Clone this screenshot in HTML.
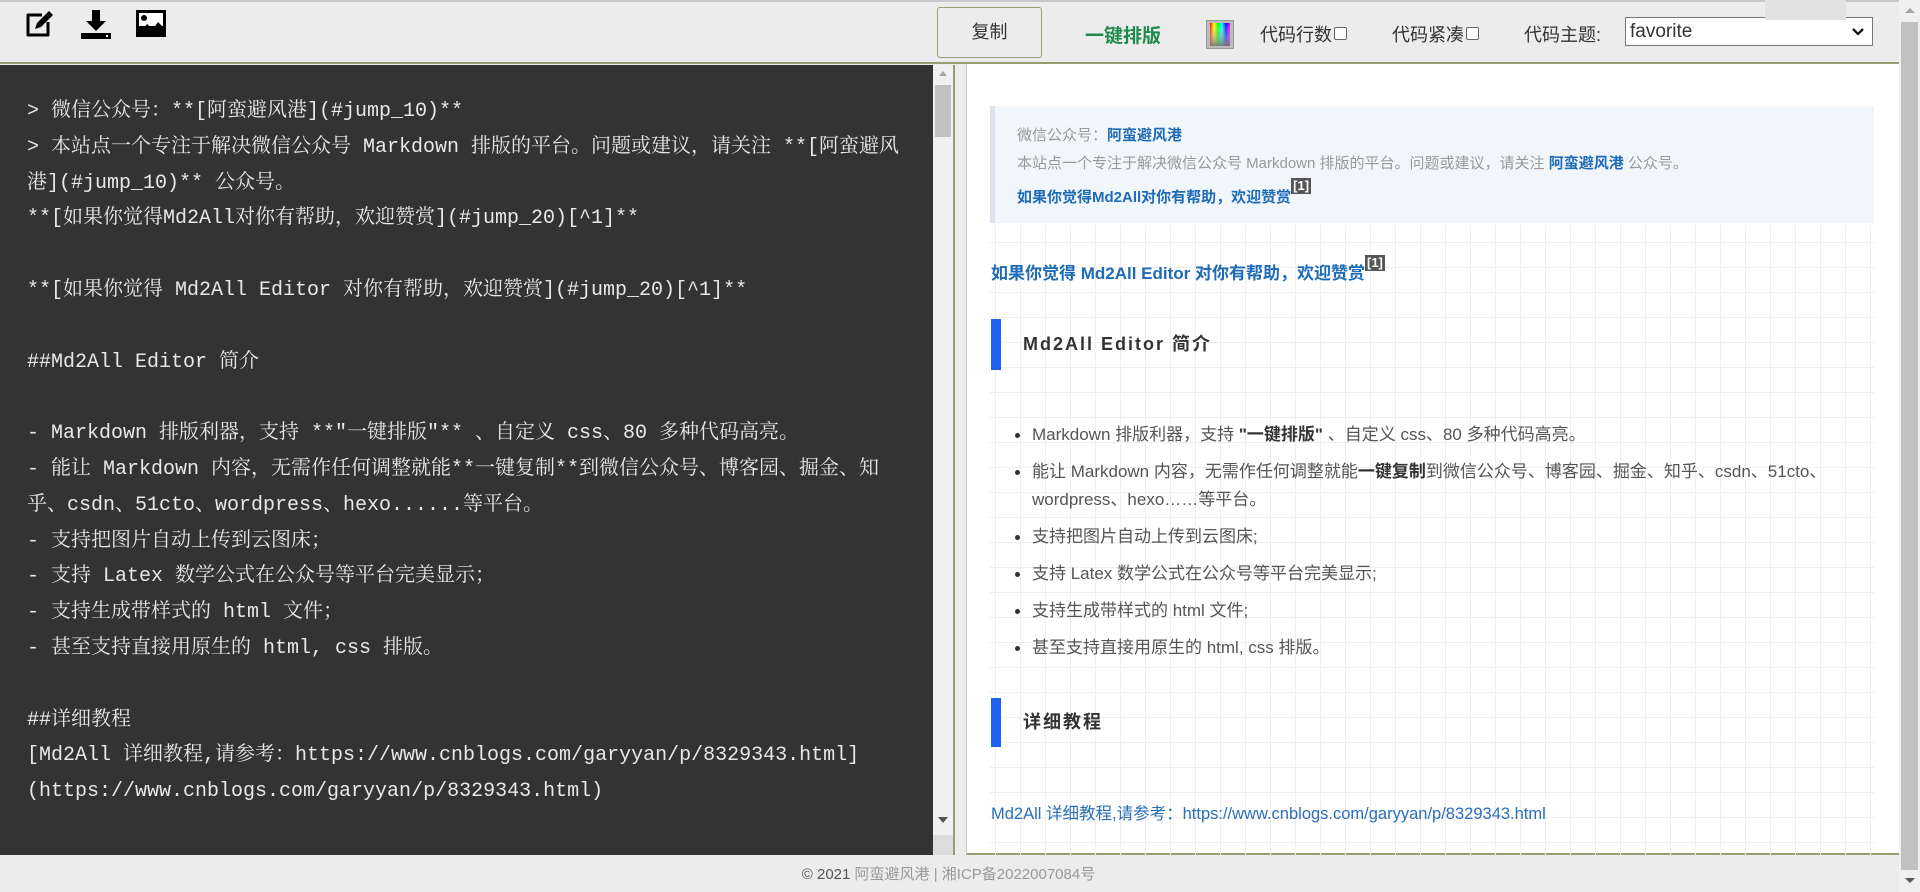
<!DOCTYPE html>
<html><head><meta charset="utf-8"><style>
*{margin:0;padding:0;box-sizing:border-box}
html,body{width:1920px;height:892px;overflow:hidden;background:#ececec;font-family:"Liberation Sans","Noto Sans CJK SC",sans-serif}
.topline{position:absolute;left:0;top:0;width:1899px;height:2px;background:#c8c8c8}
.tb{position:absolute;left:0;top:2px;width:1899px;height:62px;background:#ececec;border-bottom:2px solid #9a9d74}
.ic{position:absolute;top:10px}
.btn{position:absolute;left:937px;top:7px;width:105px;height:51px;border:1px solid #9a9d74;border-radius:3px;background:#ececec;font-size:18px;color:#333;text-align:center;line-height:49px}
.tl{position:absolute;font-size:18px;color:#333;top:21px}
.cb{display:inline-block;width:13px;height:13px;border:1px solid #666;border-radius:2px;background:#fff;vertical-align:1px;margin-left:2px}
.sel{position:absolute;left:1625px;top:17px;width:248px;height:29px;border:1px solid #777;background:#fff;font-size:19px;color:#333;padding-left:4px;line-height:27px}
.ed{position:absolute;left:0;top:65px;width:955px;height:790px;background:#333;border-right:2px solid #9a9d74}
.code{position:absolute;left:27px;top:94px;font-family:"Liberation Mono","Noto Serif CJK SC",monospace;font-size:20px;line-height:35.8px;color:#e8e8e8;white-space:pre}
.esb{position:absolute;left:933px;top:65px;width:20px;height:790px;background:#f0f0f0}
.pv{position:absolute;left:966px;top:64px;width:933px;height:791px;background:#fff;border-left:1px solid #c8c8c8;border-bottom:2px solid #9a9d74}
.grid{position:absolute;left:990px;top:225px;width:884px;height:630px;background-image:linear-gradient(#eeeeee 1px,transparent 1px),linear-gradient(90deg,#eeeeee 1px,transparent 1px);background-size:25px 25px;background-position:-20px 17px}
.bq{position:absolute;left:990px;top:106px;width:884px;height:117px;background:#f1f6fa;border-left:5px solid #dbe4ee;font-size:15px;color:#999;padding:16px 0 0 22px;line-height:28px}
a,.a{color:#1e6bb8;text-decoration:none}
b.a{font-weight:bold}
sup{display:inline-block;background:#555;color:#fff;font-size:13px;line-height:16px;padding:0 2px;vertical-align:12px;font-weight:bold}
.h{position:absolute;left:991px;border-left:10px solid #1e62f5;font-size:18px;font-weight:bold;color:#333;letter-spacing:2px;padding-left:22px}
ul{position:absolute;left:1015px;top:421px;font-size:17px;color:#555;line-height:28px;list-style:none}
ul li{position:relative;padding-left:17px;margin-bottom:9px}
ul li:before{content:"";position:absolute;left:0;top:12px;width:5px;height:5px;border-radius:50%;background:#333}
ul b{color:#333}
.psb{position:absolute;left:1899px;top:0;width:21px;height:892px;background:#f0f0f0}
.ft{position:absolute;top:863px;left:0;width:1899px;text-align:center;font-size:15px;color:#999;padding-right:2px}
</style></head><body>
<div class="topline"></div>
<div class="tb">
<svg class="ic" style="left:25px;top:8px" width="30" height="28" viewBox="0 0 30 28"><path d="M17 5H3v20h20V12" fill="none" stroke="#000" stroke-width="3" stroke-linejoin="round"/><path d="M10 19l2-6L24 1l4 4-12 12z" fill="#000"/></svg>
<svg class="ic" style="left:81px;top:8px" width="30" height="30" viewBox="0 0 30 30"><path d="M11 0h8v11h6L15 21 5 11h6z" fill="#000"/><rect x="0" y="23" width="30" height="6" fill="#000"/><rect x="25" y="25" width="2" height="2" fill="#fff"/></svg>
<svg class="ic" style="left:136px;top:8px" width="30" height="27" viewBox="0 0 30 27"><rect x="0" y="0" width="30" height="27" fill="#000"/><rect x="3" y="3" width="24" height="13" fill="#fff"/><circle cx="8" cy="8" r="3" fill="#000"/><path d="M3 24l8-10 6 5 5-7 5 5v12z" fill="#000"/></svg>
</div>
<div class="btn">复制</div>
<div class="tl" style="left:1085px;color:#1c8a4a;font-weight:bold;font-size:19px">一键排版</div>
<svg style="position:absolute;left:1206px;top:20px" width="28" height="29"><defs><linearGradient id="g" x1="0" x2="1"><stop offset="0" stop-color="#f00"/><stop offset=".2" stop-color="#ff0"/><stop offset=".4" stop-color="#0f0"/><stop offset=".6" stop-color="#0ff"/><stop offset=".8" stop-color="#00f"/><stop offset="1" stop-color="#f0f"/></linearGradient><linearGradient id="g2" x1="0" y1="0" x2="0" y2="1"><stop offset="0" stop-color="#fff" stop-opacity="0"/><stop offset="1" stop-color="#777" stop-opacity=".9"/></linearGradient></defs><rect x="0.5" y="0.5" width="27" height="28" fill="#bbb" stroke="#999"/><rect x="4" y="3" width="20" height="23" fill="url(#g)"/><rect x="4" y="3" width="20" height="23" fill="url(#g2)"/></svg>
<div class="tl" style="left:1260px">代码行数<span class="cb"></span></div>
<div class="tl" style="left:1392px">代码紧凑<span class="cb"></span></div>
<div class="tl" style="left:1524px">代码主题:</div>
<div class="sel">favorite<svg style="position:absolute;right:8px;top:10px" width="12" height="8"><path d="M1 1l5 5 5-5" fill="none" stroke="#000" stroke-width="2.2"/></svg></div>
<div style="position:absolute;left:1765px;top:0;width:81px;height:20px;background:#e2e2e2"></div>

<div class="ed"></div>
<div class="code">&gt; 微信公众号：**[阿蛮避风港](#jump_10)**
&gt; 本站点一个专注于解决微信公众号 Markdown 排版的平台。问题或建议，请关注 **[阿蛮避风
港](#jump_10)** 公众号。
**[如果你觉得Md2All对你有帮助，欢迎赞赏](#jump_20)[^1]**

**[如果你觉得 Md2All Editor 对你有帮助，欢迎赞赏](#jump_20)[^1]**

##Md2All Editor 简介

- Markdown 排版利器，支持 **"一键排版"** 、自定义 css、80 多种代码高亮。
- 能让 Markdown 内容，无需作任何调整就能**一键复制**到微信公众号、博客园、掘金、知
乎、csdn、51cto、wordpress、hexo......等平台。
- 支持把图片自动上传到云图床；
- 支持 Latex 数学公式在公众号等平台完美显示；
- 支持生成带样式的 html 文件；
- 甚至支持直接用原生的 html, css 排版。

##详细教程
[Md2All 详细教程,请参考：https://www.cnblogs.com/garyyan/p/8329343.html]
(https://www.cnblogs.com/garyyan/p/8329343.html)</div>
<div class="esb"><div style="position:absolute;left:2px;top:20px;width:16px;height:52px;background:#c1c1c1"></div>
<div style="position:absolute;left:6px;top:6px;border:4px solid transparent;border-bottom:5px solid #a3a3a3;border-top:0"></div>
<div style="position:absolute;left:5px;top:752px;border:5px solid transparent;border-top:6px solid #555;border-bottom:0"></div>
<div style="position:absolute;left:0;top:770px;width:20px;height:20px;background:#dcdcdc"></div></div>

<div class="pv"></div>
<div class="grid"></div>
<div class="bq">微信公众号：<b class="a">阿蛮避风港</b><br>本站点一个专注于解决微信公众号 Markdown 排版的平台。问题或建议，请关注 <b class="a">阿蛮避风港</b> 公众号。<br><b class="a">如果你觉得Md2All对你有帮助，欢迎赞赏</b><sup>[1]</sup></div>
<div style="position:absolute;left:991px;top:255px;font-size:17px"><b class="a">如果你觉得 Md2All Editor 对你有帮助，欢迎赞赏</b><sup>[1]</sup></div>
<div class="h" style="top:319px;height:51px;line-height:51px">Md2All Editor 简介</div>
<ul>
<li>Markdown 排版利器，支持 <b>"一键排版"</b> 、自定义 css、80 多种代码高亮。</li>
<li>能让 Markdown 内容，无需作任何调整就能<b>一键复制</b>到微信公众号、博客园、掘金、知乎、csdn、51cto、<br>wordpress、hexo……等平台。</li>
<li>支持把图片自动上传到云图床;</li>
<li>支持 Latex 数学公式在公众号等平台完美显示;</li>
<li>支持生成带样式的 html 文件;</li>
<li>甚至支持直接用原生的 html, css 排版。</li>
</ul>
<div class="h" style="top:698px;height:49px;line-height:49px">详细教程</div>
<div style="position:absolute;left:991px;top:800px;font-size:16.5px;color:#2a6fba">Md2All 详细教程,请参考：https://www.cnblogs.com/garyyan/p/8329343.html</div>

<div class="psb"><div style="position:absolute;left:2px;top:22px;width:17px;height:848px;background:#c1c1c1"></div>
<div style="position:absolute;left:6px;top:8px;border:5px solid transparent;border-bottom:5px solid #a3a3a3;border-top:0"></div>
<div style="position:absolute;left:6px;top:878px;border:5px solid transparent;border-top:5px solid #555;border-bottom:0"></div></div>
<div class="ft"><span style="color:#555">© 2021</span> 阿蛮避风港 | 湘ICP备2022007084号</div>
</body></html>
